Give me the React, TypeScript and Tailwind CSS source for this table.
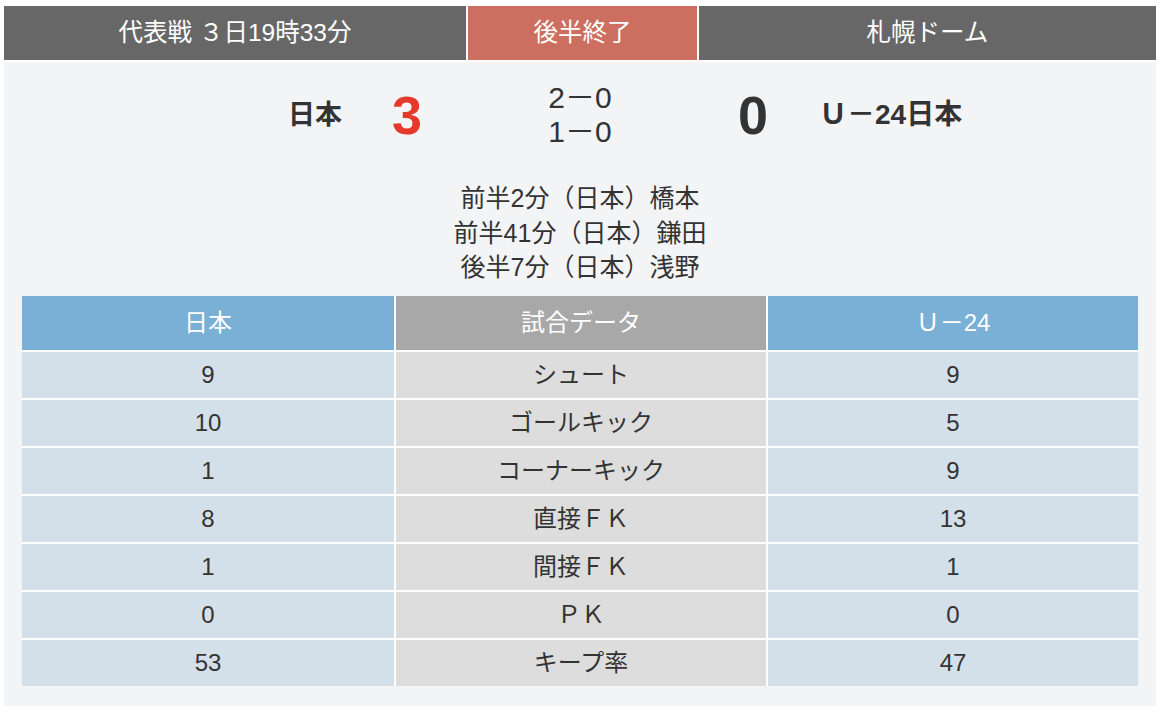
const stats = [
  { home: "9", label: "シュート", away: "9" },
  { home: "10", label: "ゴールキック", away: "5" },
  { home: "1", label: "コーナーキック", away: "9" },
  { home: "8", label: "直接ＦＫ", away: "13" },
  { home: "1", label: "間接ＦＫ", away: "1" },
  { home: "0", label: "ＰＫ", away: "0" },
  { home: "53", label: "キープ率", away: "47" },
];

const goals = [
  "前半2分（日本）橋本",
  "前半41分（日本）鎌田",
  "後半7分（日本）浅野",
];

export default function App() {
  return (
    <div
      className="min-h-[712px] bg-white pt-[6px] text-[#333333]"
      style={{ fontFamily: '"Liberation Sans", "Noto Sans CJK JP", sans-serif' }}
    >
      <div className="ml-[4px] w-[1152px]">
        {/* header */}
        <div className="flex h-[54px] gap-[2px] text-[24.5px] text-white">
          <div className="flex w-[462px] items-center justify-center bg-[#676767]">
            代表戦 ３日19時33分
          </div>
          <div className="flex w-[229px] items-center justify-center bg-[#cc6f60]">
            後半終了
          </div>
          <div className="flex flex-1 items-center justify-center bg-[#676767]">
            札幌ドーム
          </div>
        </div>

        <div className="mt-[2px] bg-[#f3f4f6] pb-[20px] pt-[16px]">
          {/* score row */}
          <div className="flex h-[74px] items-center justify-center">
            <div className="w-[300px] text-right text-[27px] font-bold">日本</div>
            <div className="w-[130px] text-center text-[54px] font-bold leading-none text-[#e5392b]">
              3
            </div>
            <div className="w-[216px] text-center text-[30px] leading-[34px]">
              <div>2－0</div>
              <div>1－0</div>
            </div>
            <div className="w-[130px] text-center text-[54px] font-bold leading-none">0</div>
            <div className="w-[300px] pl-[1px] text-left text-[28px] font-bold">Ｕ－24日本</div>
          </div>

          {/* goals */}
          <div className="mt-[29px] text-center text-[25px] leading-[34.5px]">
            {goals.map((g) => (
              <div key={g}>{g}</div>
            ))}
          </div>

          {/* stats table */}
          <div className="mx-[18px] mt-[11px] grid grid-cols-[372px_370px_370px] gap-[2px] bg-white text-[24px]">
            <div className="flex h-[54px] items-center justify-center bg-[#7aafd6] text-white">日本</div>
            <div className="flex h-[54px] items-center justify-center bg-[#a8a8a8] text-white">試合データ</div>
            <div className="flex h-[54px] items-center justify-center bg-[#7aafd6] text-white">Ｕ－24</div>
            {stats.map((s) => (
              <>
                <div key={s.label + "h"} className="flex h-[46px] items-center justify-center bg-[#d3e0ea]">
                  {s.home}
                </div>
                <div key={s.label} className="flex h-[46px] items-center justify-center bg-[#dddddd]">
                  {s.label}
                </div>
                <div key={s.label + "a"} className="flex h-[46px] items-center justify-center bg-[#d3e0ea]">
                  {s.away}
                </div>
              </>
            ))}
          </div>
        </div>
      </div>
    </div>
  );
}
